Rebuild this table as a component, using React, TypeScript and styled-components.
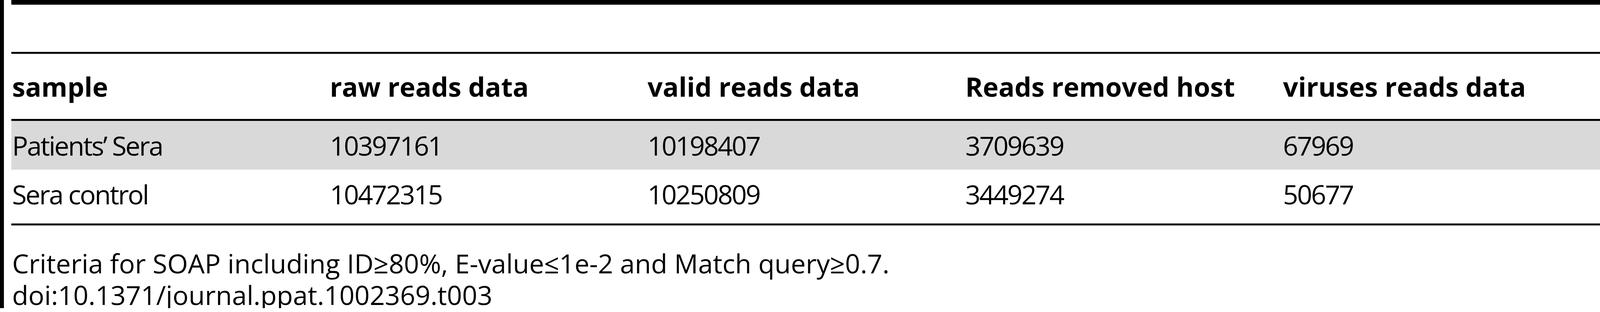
import styled, { createGlobalStyle } from "styled-components";

// one unit = one pixel of the 800px-high reference, whatever the viewport
const u = (n: number) => `calc(${n} * var(--u))`;

const GlobalStyle = createGlobalStyle`
  :root {
    --u: calc(100vh / 800);
  }
  html, body {
    margin: 0;
    padding: 0;
    background: #fff;
  }
  body {
    font-family: "Open Sans", "Noto Sans", "Liberation Sans", sans-serif;
    color: #000;
  }
`;

const FrameEl = styled.div`
  box-sizing: border-box;
  width: 100%;
  height: ${u(790)};
  border-left: ${u(10)} solid #000;
  padding-left: ${u(19)};
`;

const TableEl = styled.table`
  width: 100%;
  table-layout: fixed;
  border-collapse: separate;
  border-spacing: 0;
  border-top: ${u(12)} solid #000;
`;

const CaptionCell = styled.td`
  height: ${u(121)};
  padding: 0;
`;

const HeadCell = styled.th`
  height: ${u(167)};
  padding: 0 0 0 ${u(2)};
  border-top: ${u(5)} solid #000;
  border-bottom: ${u(5)} solid #000;
  text-align: left;
  vertical-align: middle;
  font-size: ${u(68)};
  font-weight: 700;
  white-space: nowrap;
`;

const BodyCell = styled.td<{ $shade?: boolean; $last?: boolean }>`
  height: ${u(125)};
  padding: 0 0 ${(p) => (p.$last ? u(13) : "0")} ${u(2)};
  background: ${(p) => (p.$shade ? "#d9d9d9" : "transparent")};
  border-bottom: ${(p) => (p.$last ? `${u(5)} solid #000` : "none")};
  vertical-align: middle;
  font-size: ${u(68)};
  letter-spacing: ${u(-3)};
  white-space: nowrap;
`;

const NoteEl = styled.div`
  margin-top: ${u(56)};
  padding-left: ${u(2)};
  font-size: ${u(68)};
  line-height: ${u(81)};
  white-space: nowrap;
`;

const columns = [
  "sample",
  "raw reads data",
  "valid reads data",
  "Reads removed host",
  "viruses reads data",
];

const rows = [
  ["Patients\u2019 Sera", "10397161", "10198407", "3709639", "67969"],
  ["Sera control", "10472315", "10250809", "3449274", "50677"],
];

export default function App() {
  return (
    <>
      <GlobalStyle />
      <FrameEl>
        <TableEl>
          <thead>
            <tr>
              <CaptionCell colSpan={5} />
            </tr>
            <tr>
              {columns.map((c) => (
                <HeadCell key={c}>{c}</HeadCell>
              ))}
            </tr>
          </thead>
          <tbody>
            {rows.map((r, i) => (
              <tr key={r[0]}>
                {r.map((v, j) => (
                  <BodyCell
                    key={j}
                    $shade={i === 0}
                    $last={i === rows.length - 1}
                  >
                    {v}
                  </BodyCell>
                ))}
              </tr>
            ))}
          </tbody>
        </TableEl>
        <NoteEl>
          <div>
            Criteria for SOAP including ID≥80%, E-value≤1e-2 and Match
            query≥0.7.
          </div>
          <div>doi:10.1371/journal.ppat.1002369.t003</div>
        </NoteEl>
      </FrameEl>
    </>
  );
}
